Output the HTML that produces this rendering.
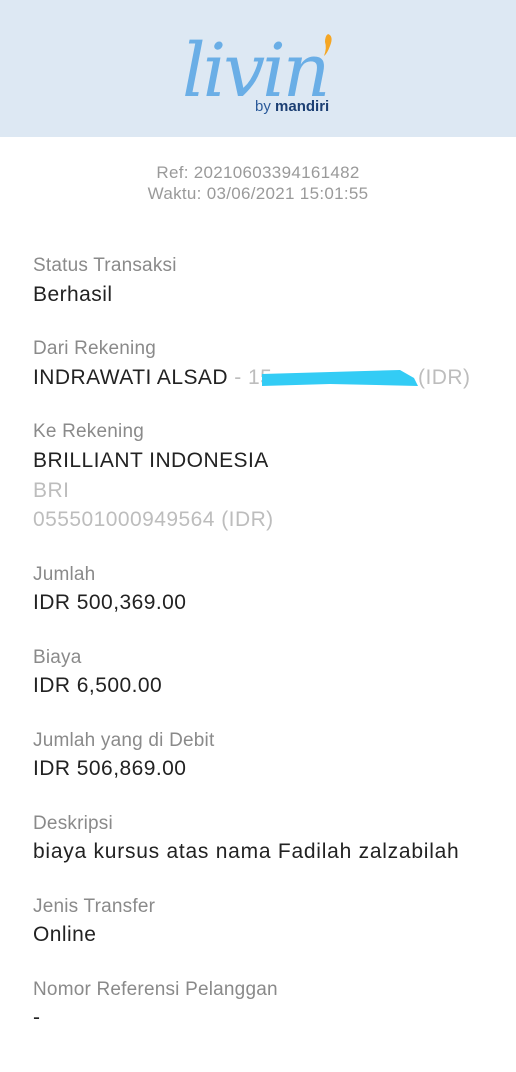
<!DOCTYPE html>
<html><head><meta charset="utf-8"><style>
*{margin:0;padding:0;box-sizing:border-box}
body{width:516px;height:1072px;background:#fff;position:relative;overflow:hidden;font-family:"Liberation Sans",sans-serif}
.hdr{position:absolute;left:0;top:0;width:516px;height:137px;background:#dde8f3}
.t{position:absolute;left:33px;white-space:nowrap;line-height:1}
.l{font-size:19px;color:#8a8a8a;letter-spacing:0.2px}
.v{font-size:21px;color:#222;letter-spacing:0.45px}
.g{color:#bdbdbd}
.c{position:absolute;left:0;width:516px;text-align:center;font-size:17px;color:#9a9a9a;line-height:1;letter-spacing:0.3px}
</style></head><body>
<div class="hdr">
<svg width="516" height="137" style="position:absolute;left:0;top:0">
<text x="182" y="96" font-family="DejaVu Serif" font-style="italic" font-size="74" fill="#6aaee6" letter-spacing="-3">livin</text>
<path d="M328 34 q6 2 2 12 q-3 8 -6 10 q3-8 1-14 q0-6 3-8z" fill="#f5a623"/>
<text x="255" y="111" font-family="Liberation Sans" font-size="15" fill="#2a5a9a">by <tspan font-weight="bold" fill="#1c3f73">mandiri</tspan></text>
</svg>
</div>
<div class="c" style="top:164px">Ref: 20210603394161482</div>
<div class="c" style="top:185px">Waktu: 03/06/2021 15:01:55</div>

<div class="t l" style="top:256px">Status Transaksi</div>
<div class="t v" style="top:284px">Berhasil</div>

<div class="t l" style="top:339px">Dari Rekening</div>
<div class="t v" style="top:367px">INDRAWATI ALSAD <span class="g">- 15</span></div>
<div class="t v g" style="top:367px;left:418px">(IDR)</div>
<svg width="516" height="40" style="position:absolute;left:0;top:360px">
<path d="M262 14 L400 10 L414 18 L418 26 L330 24 L262 26 Z" fill="#33ccf5"/>
</svg>

<div class="t l" style="top:422px">Ke Rekening</div>
<div class="t v" style="top:450px">BRILLIANT INDONESIA</div>
<div class="t v g" style="top:480px">BRI</div>
<div class="t v g" style="top:509px">055501000949564 (IDR)</div>

<div class="t l" style="top:565px">Jumlah</div>
<div class="t v" style="top:592px">IDR 500,369.00</div>

<div class="t l" style="top:648px">Biaya</div>
<div class="t v" style="top:675px">IDR 6,500.00</div>

<div class="t l" style="top:731px">Jumlah yang di Debit</div>
<div class="t v" style="top:758px">IDR 506,869.00</div>

<div class="t l" style="top:814px">Deskripsi</div>
<div class="t v" style="top:841px;letter-spacing:0.75px">biaya kursus atas nama Fadilah zalzabilah</div>

<div class="t l" style="top:897px">Jenis Transfer</div>
<div class="t v" style="top:924px">Online</div>

<div class="t l" style="top:980px">Nomor Referensi Pelanggan</div>
<div class="t v" style="top:1007px">-</div>
</body></html>
